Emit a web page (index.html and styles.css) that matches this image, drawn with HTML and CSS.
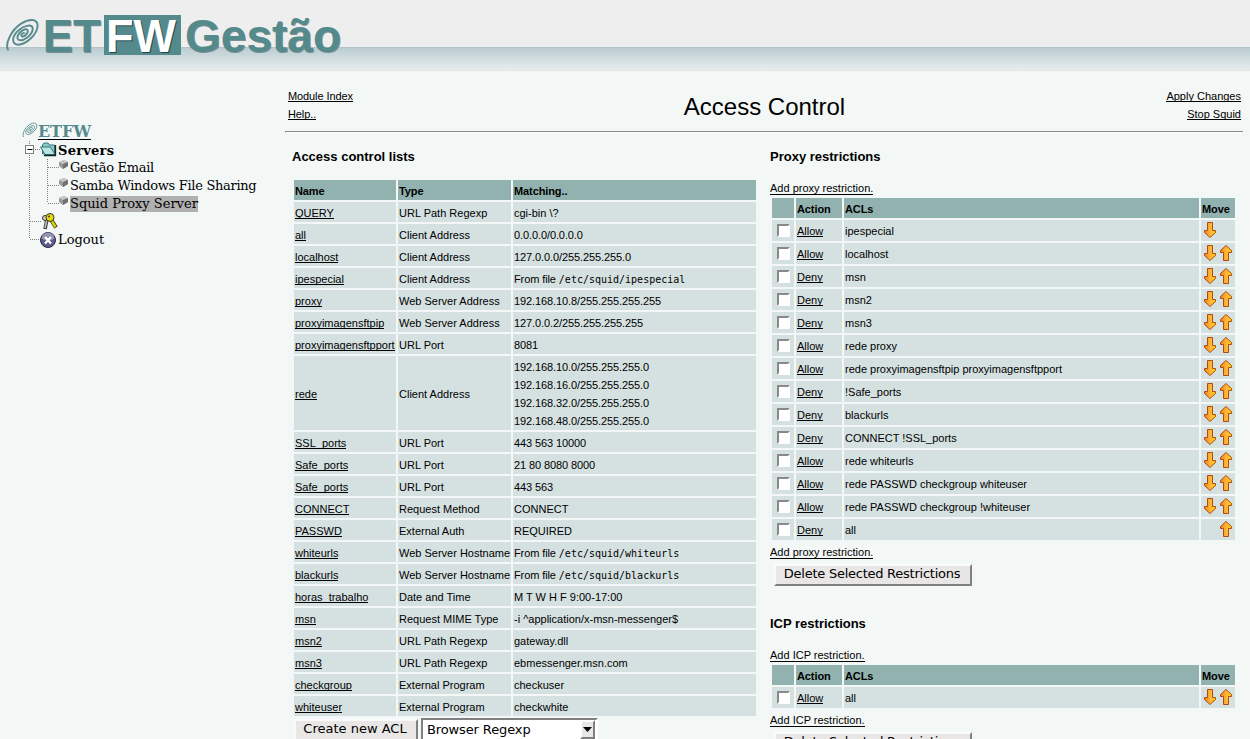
FILE: index.html
```html
<!DOCTYPE html>
<html lang="pt">
<head>
<meta charset="utf-8">
<title>ETFW Gestão</title>
<link rel="stylesheet" href="styles.css">
</head>
<body>
<svg class="defs" width="0" height="0">
  <linearGradient id="gold"><stop offset="0" stop-color="#f07c20"/><stop offset=".5" stop-color="#ffb43c"/><stop offset="1" stop-color="#ffd400"/></linearGradient>
  <symbol id="down" viewBox="0 0 12 16"><path d="M3.500.5h5v8h3v2L6 15.500.5 10.500v-2h3z" fill="url(#gold)" stroke="#b04a10"/></symbol>
  <symbol id="up" viewBox="0 0 12 16"><path d="M3.500 15.500h5v-8h3v-2L6 .5.5 5.500v2h3z" fill="url(#gold)" stroke="#b04a10"/></symbol>
  <symbol id="swirl" viewBox="0 0 36 36"><path fill="none" stroke="#578b8e" stroke-width="2" stroke-linecap="round" d="M3 33C0 27 6 13 17 6C25 1 34 1 33.500 9C33 17 23 27 14 28C6 28 7 19 14 13C20 8 29 6 28.500 12C28 18 19 25 14 23C10 20 17 12 22 12C26 13 21 20 17.500 19.500C15.500 18 18 16 19.500 16"/></symbol>
  <symbol id="cube" viewBox="0 0 9 9"><path d="M0 2 5 0l4 2v4L4 9 0 6z" fill="#999"/><path d="M0 2 5 0l4 2-5 2z" fill="#c8c8c8"/><path d="M4 4l5-2v4L4 9z" fill="#707070"/></symbol>
</svg>
<header class="banner">
  <svg class="swirl-lg"><use href="#swirl"/></svg>
  <svg class="wordmark" width="310" height="70" viewBox="40 0 310 70">
    <g class="brand shade"><text x="43.700" y="53" textLength="58" lengthAdjust="spacingAndGlyphs">ET</text><text x="186" y="52.500" textLength="156" lengthAdjust="spacingAndGlyphs">Gestão</text></g>
    <g class="brand"><text x="42.700" y="52" textLength="58" lengthAdjust="spacingAndGlyphs">ET</text><text x="185" y="51.500" textLength="156" lengthAdjust="spacingAndGlyphs">Gestão</text></g>
    <rect x="104" y="15" width="77" height="40" fill="#558a8d"/>
    <text class="brand dark" x="107" y="53" textLength="70" lengthAdjust="spacingAndGlyphs">FW</text>
    <text class="brand white" x="106" y="52" textLength="70" lengthAdjust="spacingAndGlyphs">FW</text>
  </svg>
</header>
<div class="page">
<nav class="tree">
  <div class="root"><svg width="16" height="16"><use href="#swirl"/></svg><a>ETFW</a></div>
  <div class="node servers">
    <svg width="36" height="18"><path d="M7.500 0V18M13 8.500h5" class="dots"/><rect x="3.500" y="4.500" width="8" height="8" fill="#fff" stroke="#808080"/><path d="M5.500 8.500h5" stroke="#000"/><path d="M20.500 13V4l1.500-2h4l1.500 2h5v9z" fill="#8fc9c9" stroke="#357577"/><path d="M18.500 6h10l4.500 7.500H23z" fill="#b8e4e2" stroke="#357577"/><path d="M22 14.500h11.500V4" stroke="#102828" fill="none" stroke-width="1.300"/></svg>
    <b>Servers</b>
  </div>
  <div class="node leaf"><svg width="48" height="18"><path d="M7.500 0V18M25.500 0V18M26 8.500h11" class="dots"/><use href="#cube" x="37" y="1" width="9" height="9"/></svg><span>Gestão Email</span></div>
  <div class="node leaf"><svg width="48" height="18"><path d="M7.500 0V18M25.500 0V18M26 8.500h11" class="dots"/><use href="#cube" x="37" y="1" width="9" height="9"/></svg><span>Samba Windows File Sharing</span></div>
  <div class="node leaf"><svg width="48" height="18"><path d="M7.500 0V18M25.500 0V8M26 8.500h11" class="dots"/><use href="#cube" x="37" y="1" width="9" height="9"/></svg><span class="current">Squid Proxy Server</span></div>
  <div class="node"><svg width="36" height="18"><path d="M7.500 0V18M8 8.500h11" class="dots"/><path d="M25 6 23 16" stroke="#333" stroke-width="3.500"/><path d="M25 6 23 15" stroke="#bbb" stroke-width="1.700"/><path d="M28 5l6 9.500" stroke="#333" stroke-width="4"/><path d="M28 5l5.500 9" stroke="#d8d000" stroke-width="2.500"/><circle cx="23" cy="5" r="2.500" fill="#ccc" stroke="#333"/><circle cx="28" cy="4.500" r="4" fill="#e4dc00" stroke="#333"/><circle cx="27" cy="3.500" r="1" fill="#444"/></svg></div>
  <div class="node"><svg width="36" height="18"><path d="M7.500 0V8M8 8.500h11" class="dots"/><circle cx="26" cy="9" r="7.500" fill="#5c5c8a" stroke="#27273f"/><path d="M19.500 7.500a6.500 6 0 0 1 13 0q-6 4-13 0" fill="#9292b4"/><path d="M23 6l6 6.500M29 6 23 12.500" stroke="#fff" stroke-width="2.400"/></svg><span>Logout</span></div>
</nav>
<main>
  <div class="title-row">
    <div class="links"><a>Module Index</a><a>Help..</a></div>
    <h1>Access Control</h1>
    <div class="links end"><a>Apply Changes</a><a>Stop Squid</a></div>
  </div>
  <div class="rule"></div>
  <div class="columns">
    <section class="lists">
      <h2>Access control lists</h2>
      <table class="acl">
        <colgroup><col class="c-name"><col class="c-type"><col></colgroup>
        <tr><th>Name</th><th>Type</th><th>Matching..</th></tr>
        <tr><td><a>QUERY</a></td><td>URL Path Regexp</td><td>cgi-bin \?</td></tr>
        <tr><td><a>all</a></td><td>Client Address</td><td class="num">0.0.0.0/0.0.0.0</td></tr>
        <tr><td><a>localhost</a></td><td>Client Address</td><td class="num">127.0.0.0/255.255.255.0</td></tr>
        <tr><td><a>ipespecial</a></td><td>Client Address</td><td class="num">From file <code>/etc/squid/ipespecial</code></td></tr>
        <tr><td><a>proxy</a></td><td>Web Server Address</td><td class="num">192.168.10.8/255.255.255.255</td></tr>
        <tr><td><a>proxyimagensftpip</a></td><td>Web Server Address</td><td class="num">127.0.0.2/255.255.255.255</td></tr>
        <tr><td><a>proxyimagensftpport</a></td><td>URL Port</td><td class="num">8081</td></tr>
        <tr><td><a>rede</a></td><td>Client Address</td><td class="num">192.168.10.0/255.255.255.0<br>192.168.16.0/255.255.255.0<br>192.168.32.0/255.255.255.0<br>192.168.48.0/255.255.255.0</td></tr>
        <tr><td><a>SSL_ports</a></td><td>URL Port</td><td class="num">443 563 10000</td></tr>
        <tr><td><a>Safe_ports</a></td><td>URL Port</td><td class="num">21 80 8080 8000</td></tr>
        <tr><td><a>Safe_ports</a></td><td>URL Port</td><td class="num">443 563</td></tr>
        <tr><td><a>CONNECT</a></td><td>Request Method</td><td>CONNECT</td></tr>
        <tr><td><a>PASSWD</a></td><td>External Auth</td><td>REQUIRED</td></tr>
        <tr><td><a>whiteurls</a></td><td>Web Server Hostname</td><td class="num">From file <code>/etc/squid/whiteurls</code></td></tr>
        <tr><td><a>blackurls</a></td><td>Web Server Hostname</td><td class="num">From file <code>/etc/squid/blackurls</code></td></tr>
        <tr><td><a>horas_trabalho</a></td><td>Date and Time</td><td>M T W H F 9:00-17:00</td></tr>
        <tr><td><a>msn</a></td><td>Request MIME Type</td><td>-i ^application/x-msn-messenger$</td></tr>
        <tr><td><a>msn2</a></td><td>URL Path Regexp</td><td>gateway.dll</td></tr>
        <tr><td><a>msn3</a></td><td>URL Path Regexp</td><td>ebmessenger.msn.com</td></tr>
        <tr><td><a>checkgroup</a></td><td>External Program</td><td>checkuser</td></tr>
        <tr><td><a>whiteuser</a></td><td>External Program</td><td>checkwhite</td></tr>
      </table>
      <div class="create"><button class="btn new">Create new ACL</button><div class="select"><span>Browser Regexp</span><i><svg width="9" height="5"><path d="M0 0h9L4.500 5z"/></svg></i></div></div>
    </section>
    <section class="restrictions">
      <h2>Proxy restrictions</h2>
      <a class="add">Add proxy restriction.</a>
      <table class="rules">
        <colgroup><col class="c-check"><col class="c-action"><col><col class="c-move"></colgroup>
        <tr><th></th><th>Action</th><th>ACLs</th><th>Move</th></tr>
        <tr><td><i class="box"></i></td><td><a>Allow</a></td><td>ipespecial</td><td><div class="move"><svg><use href="#down"/></svg></div></td></tr>
        <tr><td><i class="box"></i></td><td><a>Allow</a></td><td>localhost</td><td><div class="move"><svg><use href="#down"/></svg><svg><use href="#up"/></svg></div></td></tr>
        <tr><td><i class="box"></i></td><td><a>Deny</a></td><td>msn</td><td><div class="move"><svg><use href="#down"/></svg><svg><use href="#up"/></svg></div></td></tr>
        <tr><td><i class="box"></i></td><td><a>Deny</a></td><td>msn2</td><td><div class="move"><svg><use href="#down"/></svg><svg><use href="#up"/></svg></div></td></tr>
        <tr><td><i class="box"></i></td><td><a>Deny</a></td><td>msn3</td><td><div class="move"><svg><use href="#down"/></svg><svg><use href="#up"/></svg></div></td></tr>
        <tr><td><i class="box"></i></td><td><a>Allow</a></td><td>rede proxy</td><td><div class="move"><svg><use href="#down"/></svg><svg><use href="#up"/></svg></div></td></tr>
        <tr><td><i class="box"></i></td><td><a>Allow</a></td><td>rede proxyimagensftpip proxyimagensftpport</td><td><div class="move"><svg><use href="#down"/></svg><svg><use href="#up"/></svg></div></td></tr>
        <tr><td><i class="box"></i></td><td><a>Deny</a></td><td>!Safe_ports</td><td><div class="move"><svg><use href="#down"/></svg><svg><use href="#up"/></svg></div></td></tr>
        <tr><td><i class="box"></i></td><td><a>Deny</a></td><td>blackurls</td><td><div class="move"><svg><use href="#down"/></svg><svg><use href="#up"/></svg></div></td></tr>
        <tr><td><i class="box"></i></td><td><a>Deny</a></td><td>CONNECT !SSL_ports</td><td><div class="move"><svg><use href="#down"/></svg><svg><use href="#up"/></svg></div></td></tr>
        <tr><td><i class="box"></i></td><td><a>Allow</a></td><td>rede whiteurls</td><td><div class="move"><svg><use href="#down"/></svg><svg><use href="#up"/></svg></div></td></tr>
        <tr><td><i class="box"></i></td><td><a>Allow</a></td><td>rede PASSWD checkgroup whiteuser</td><td><div class="move"><svg><use href="#down"/></svg><svg><use href="#up"/></svg></div></td></tr>
        <tr><td><i class="box"></i></td><td><a>Allow</a></td><td>rede PASSWD checkgroup !whiteuser</td><td><div class="move"><svg><use href="#down"/></svg><svg><use href="#up"/></svg></div></td></tr>
        <tr><td><i class="box"></i></td><td><a>Deny</a></td><td>all</td><td><div class="move last"><svg><use href="#up"/></svg></div></td></tr>
      </table>
      <a class="add after">Add proxy restriction.</a>
      <button class="btn delete">Delete Selected Restrictions</button>
      <h2 class="icp">ICP restrictions</h2>
      <a class="add">Add ICP restriction.</a>
      <table class="rules">
        <colgroup><col class="c-check"><col class="c-action"><col><col class="c-move"></colgroup>
        <tr><th></th><th>Action</th><th>ACLs</th><th>Move</th></tr>
        <tr><td><i class="box"></i></td><td><a>Allow</a></td><td>all</td><td><div class="move"><svg><use href="#down"/></svg><svg><use href="#up"/></svg></div></td></tr>
      </table>
      <a class="add after">Add ICP restriction.</a>
      <button class="btn delete">Delete Selected Restrictions</button>
    </section>
  </div>
</main>
</div>
</body>
</html>
```
FILE: styles.css
```css
* { box-sizing: border-box; }
html, body { height: 739px; overflow: hidden; }
body { margin: 0; background: #f3f7f6; color: #000; font: 11px/18px "Liberation Sans", Arial, sans-serif; }
.defs { display: block; width: 0; height: 0; position: absolute; }
.banner { height: 71px; display: flex; border-bottom: 1px solid #e6e4e4; background: linear-gradient(#eee 0 47px, #b2c4c9 47px 48px, #bbcdd2 48px, #e7edef 70px); }
.swirl-lg { margin: 17px 0 0 5px; width: 35px; height: 36px; }
.wordmark { display: block; overflow: visible; }
.brand { font: bold 47px "Liberation Sans", Arial, sans-serif; fill: #558a8d; }
.shade { fill: #7d8f91; }
.dark { fill: #1e4446; }
.white { fill: #fff; }
.page { display: flex; height: 668px; }
.tree { width: 285px; padding: 50px 0 0 22px; font: 13px/18px "DejaVu Serif", serif; }
.root { display: flex; height: 20px; font-weight: bold; font-size: 16px; color: #558a8d; }
.root svg { margin-top: 1px; }
.root a { height: 19px; line-height: 22px; letter-spacing: -0.1px; }
.node { display: flex; height: 18px; }
.node svg { flex: none; }
.node span, .node b { white-space: nowrap; line-height: 18px; }
.node b { line-height: 20px; letter-spacing: 0.25px; }
.leaf span { line-height: 16px; height: 16px; margin-top: 1px; letter-spacing: -0.3px; }
.leaf .current { background: #b0b0b0; letter-spacing: 0; }
.dots { fill: none; stroke: #808080; stroke-dasharray: 1 1; }
main { width: 958px; }
.title-row { display: flex; justify-content: space-between; height: 60px; padding: 17px 2px 0 3px; }
.links { width: 120px; display: flex; flex-direction: column; align-items: flex-start; gap: 4px; letter-spacing: -0.1px; }
.end { align-items: flex-end; letter-spacing: 0; }
a { display: inline-block; height: 14px; line-height: 16px; border-bottom: 1px solid #000; white-space: nowrap; }
h1 { margin: 4px 0 0; font-size: 24px; line-height: 30px; font-weight: normal; }
.rule { height: 2px; border-top: 1px solid #888; border-bottom: 1px solid #fff; border-left: 1px solid #888; }
.columns { display: flex; }
.lists { width: 466px; margin-left: 7px; }
.restrictions { width: 467px; margin-left: 12px; display: flex; flex-direction: column; align-items: flex-start; }
h2 { margin: 0; height: 45px; padding-top: 15px; font-size: 13px; line-height: 18px; }
table { table-layout: fixed; border-spacing: 2px; }
th, td { padding: 1px; text-align: left; vertical-align: middle; white-space: nowrap; height: 20px; line-height: 18px; }
th { background: #91b2af; padding-top: 3px; line-height: 16px; letter-spacing: -0.1px; }
td { background: #d5e0e1; }
td a { display: block; width: max-content; margin-bottom: 2px; }
.acl { width: 466px; }
.acl td { padding: 2px 1px 0; }
.num { letter-spacing: -0.1px; }
.c-name { width: 102px; } .c-type { width: 113px; }
code { font: 10px/1 "DejaVu Sans Mono", monospace; letter-spacing: 0; }
.rules { width: 467px; flex: none; }
.rules td { height: 21px; }
.c-check { width: 22px; } .c-action { width: 46px; } .c-move { width: 34px; }
.box { display: block; width: 13px; height: 13px; margin-left: 4px; background: #fff; border: 2px solid; border-color: #888 #fff #fff #888; }
.move { display: flex; gap: 4px; padding: 0 2px; margin-bottom: 1px; }
.move svg { width: 12px; height: 16px; }
.last { justify-content: flex-end; }
.create { display: flex; gap: 3px; margin-left: 2px; }
.btn { display: block; flex: none; height: 22px; padding: 0 0 2px; background: #e9e7e6; border: 2px solid; border-color: #fafafa #808080 #808080 #fafafa; font: 13px/16px "DejaVu Sans", sans-serif; white-space: nowrap; color: #000; }
.new { width: 124px; margin-top: 1px; padding-right: 2px; }
.select { display: flex; justify-content: space-between; width: 177px; height: 23px; background: #fff; border: 2px solid; border-color: #808080 #fff #fff #808080; padding-left: 4px; font: 13px/19px "DejaVu Sans", sans-serif; letter-spacing: -0.12px; }
.select i { width: 15px; height: 19px; margin-right: 1px; background: #e9e7e6; border: 2px solid; border-color: #fff #808080 #808080 #fff; display: flex; align-items: center; justify-content: center; }
.add { margin: 0 0 1px; height: 16px; padding-top: 1px; flex: none; }
.after { margin-top: 1px; }
.restrictions h2 { height: 46px; flex: none; }
.delete { width: 198px; margin: 4px 0 0 4px; padding-right: 2px; letter-spacing: -0.25px; }
.restrictions h2.icp { margin-top: 14px; }
```
